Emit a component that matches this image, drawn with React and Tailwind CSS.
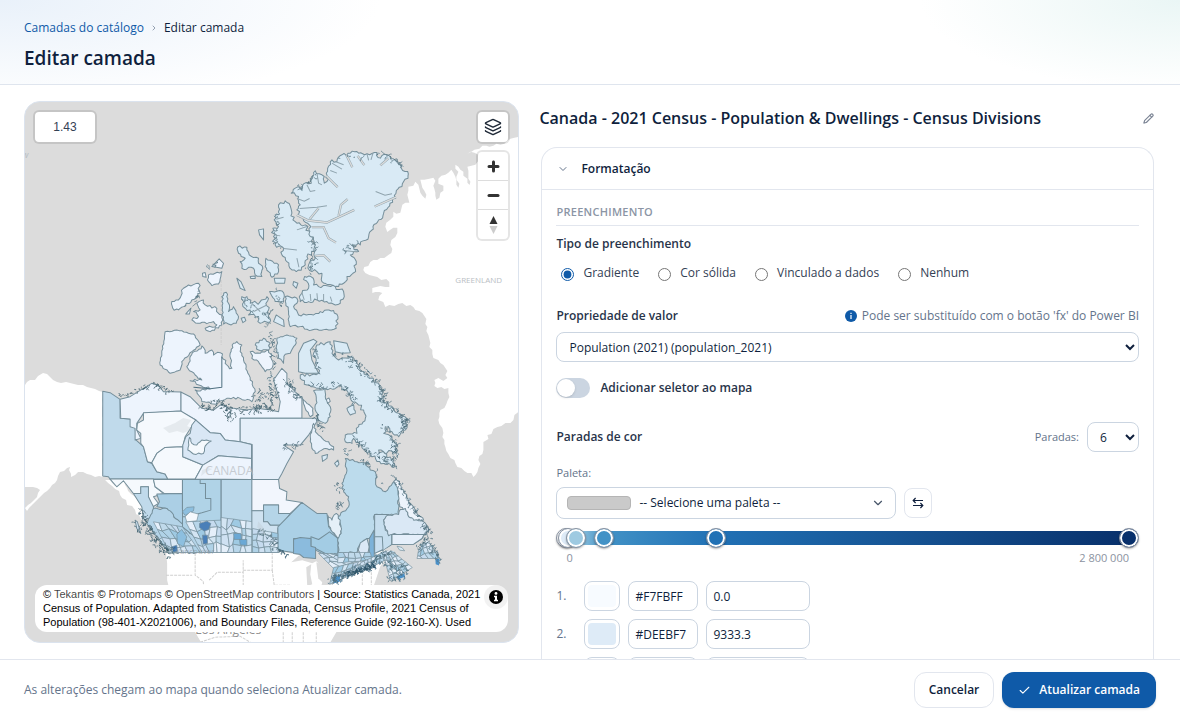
import React, { useState } from 'react';
import { ChevronDown, ChevronRight, Check, Layers, Pencil } from 'lucide-react';

const ICE = '#d9eaf5';
const PALE = '#edf4fd';
const SNOW = '#f5f9fd';
const BLUES = ['#c0daeb', '#d9e8f5', '#b0d2e7', '#e5effa', '#9fcae3', '#c6dbef', '#cfe1f2', '#b8d6ea', '#d3e5f3'];

// small seeded generator, so the map looks the same on every render
const rng = (seed) => {
  let s = seed * 7919 + 13;
  return () => {
    s = (s * 16807) % 2147483647;
    return s / 2147483647;
  };
};

const parse = (text) => text.trim().split(/\s+/).map((p) => p.split(',').map(Number));

// breaks the straight edges of an outline into a ragged coast
const coast = (text, amp = 0, step = 7) => {
  const pts = parse(text);
  if (!amp) return 'M' + pts.join('L') + 'Z';
  const rand = rng(pts[0][0] + pts.length);
  const out = [];
  pts.forEach(([x, y], i) => {
    const [nx, ny] = pts[(i + 1) % pts.length];
    const len = Math.hypot(nx - x, ny - y) || 1;
    const n = Math.max(1, Math.round(len / step));
    for (let k = 0; k < n; k++) {
      const t = k / n;
      const off = k === 0 ? 0 : (rand() - 0.5) * 2 * amp;
      out.push([
        Math.round(x + (nx - x) * t - ((ny - y) / len) * off),
        Math.round(y + (ny - y) * t + ((nx - x) / len) * off),
      ]);
    }
  });
  return 'M' + out.join('L') + 'Z';
};

// small census divisions inside a four cornered area
const divisions = (corners, cols, rows, seed) => {
  const [a, b, c, d] = parse(corners);
  const rand = rng(seed);
  const grid = [];
  for (let r = 0; r <= rows; r++) {
    for (let q = 0; q <= cols; q++) {
      const edge = r === 0 || q === 0 || r === rows || q === cols;
      const u = (q + (edge ? 0 : (rand() - 0.5) * 0.9)) / cols;
      const v = (r + (edge ? 0 : (rand() - 0.5) * 0.9)) / rows;
      grid.push([0, 1].map((i) => Math.round((1 - v) * ((1 - u) * a[i] + u * b[i]) + v * ((1 - u) * d[i] + u * c[i]))));
    }
  }
  const cells = [];
  for (let r = 0; r < rows; r++) {
    for (let q = 0; q < cols; q++) {
      const i = r * (cols + 1) + q;
      cells.push({
        d: 'M' + [grid[i], grid[i + 1], grid[i + cols + 2], grid[i + cols + 1]].join('L') + 'Z',
        fill: BLUES[Math.floor(rand() * BLUES.length)],
      });
    }
  }
  return cells;
};

// islets and inlets scattered along a shore
const islets = (text, count, spread, seed) => {
  const pts = parse(text);
  const rand = rng(seed);
  let d = '';
  for (let i = 0; i < count; i++) {
    const k = Math.floor(rand() * (pts.length - 1));
    const t = rand();
    const x = pts[k][0] + (pts[k + 1][0] - pts[k][0]) * t + (rand() - 0.5) * spread;
    const y = pts[k][1] + (pts[k + 1][1] - pts[k][1]) * t + (rand() - 0.5) * spread;
    d += `M${Math.round(x)},${Math.round(y)}l${Math.round((rand() - 0.5) * 16)},${Math.round((rand() - 0.5) * 16)}l${Math.round((rand() - 0.5) * 10)},${Math.round((rand() - 0.5) * 10)}`;
  }
  return d;
};

const arctic = [
  [ICE, '423,190 435,175 455,178 468,158 483,160 495,123 515,135 522,160 530,155 528,130 545,90 560,95 575,75 600,70 625,70 650,72 672,68 690,85 712,75 735,92 755,105 757,122 772,125 773,145 755,170 737,190 735,205 700,250 685,270 668,290 655,320 630,345 605,345 625,365 600,375 618,395 608,430 590,440 580,460 565,470 545,465 515,455 515,430 500,425 478,422 475,405 495,385 495,360 490,330 470,310 482,290 450,262 440,240 450,225 445,200', 6],
  [ICE, '405,213 420,228 425,250 435,275 465,285 480,320 495,345 492,365 470,380 465,405 445,420 425,420 410,395 395,375 400,355 375,345 370,320 368,295 385,290 372,270 385,245 385,225', 6],
  [ICE, '262,352 290,352 297,375 325,385 325,400 338,415 335,440 315,435 310,415 275,415 270,395 285,385 265,370', 4],
  [ICE, '347,385 385,405 385,425 365,442 355,425 345,410', 3],
  [ICE, '372,445 405,445 403,460 375,460', 0],
  [ICE, '430,455 443,460 438,475 428,465', 0],
  [ICE, '463,440 482,440 490,465 505,470 555,470 580,485 582,500 570,520 555,525 530,515 500,510 475,515 450,515 455,490 475,475', 6],
  [ICE, '405,500 440,505 440,520 430,530 445,555 490,555 510,545 550,542 563,560 558,595 535,600 500,598 470,598 450,590 420,590 415,545', 4],
  [ICE, '358,485 395,483 402,495 400,515 375,515', 2],
  [ICE, '378,555 400,570 402,590 370,575', 0],
  [ICE, '325,300 340,297 340,330 328,315', 0],
  [ICE, '300,440 315,438 315,446 302,446', 0],
  [ICE, '260,445 272,455 285,482 270,475', 0],
  [ICE, '275,500 290,500 300,520 330,515 350,500 355,540 355,580 330,580 325,560 295,555 300,540 285,535', 7],
  [ICE, '215,555 218,520 215,500 228,487 235,520 235,545 250,530 265,560 258,580 220,582', 4],
  [PALE, '160,510 165,525 200,535 205,550 215,555 215,585 180,605 165,595 200,585 190,575 150,580 125,570 145,560 130,545 150,540 140,520', 4],
  [PALE, '65,515 85,510 100,475 115,465 145,460 150,490 125,510 100,530 85,540 68,535', 5],
  [PALE, '175,435 215,425 212,440 205,462 185,467 172,450', 2],
  [PALE, '185,410 207,387 220,400 215,415', 0],
  [PALE, '107,552 122,535 118,552', 0],
  [PALE, '157,430 165,428 168,442 158,440', 0],
  [ICE, '273,565 283,562 287,572 278,578', 0],
];

const fjords = [
  '440,255 475,272 530,278 580,255 612,240',
  '565,258 572,225 592,208',
  '485,292 520,292 535,325 557,338',
  '673,230 737,202',
  '528,138 562,172',
  '588,75 606,112',
  '622,78 642,106',
  '690,107 715,85',
  '478,268 505,235',
  '495,378 520,376 540,395',
];

// inlets too narrow to show water
const inlets = [
  '448,236 500,232 530,228',
  '440,206 462,214 478,206',
  '676,185 704,196 725,192',
  '580,362 622,366',
  '400,356 440,360',
  '440,385 446,412',
  '455,488 462,510',
  '480,492 482,514',
  '500,490 502,512',
  '520,492 520,515',
  '540,500 545,515',
  '305,520 330,545',
  '310,545 350,525',
  '470,165 480,185 495,182',
  '500,130 505,160 515,165',
  '545,100 575,118',
  '555,95 580,105',
  '560,130 540,122',
  '650,72 655,92',
  '668,70 662,90',
  '440,300 470,290',
  '378,268 400,262',
  '372,315 390,318',
];

const west = [
  [PALE, '435,5 470,0 520,12 540,45 515,65 485,95 480,120 450,130 420,105 425,70', 2],
  [PALE, '500,110 510,80 545,48 555,70 575,60 580,75 600,68 625,110 635,115 630,70 640,40 650,35 665,45 660,65 670,90 690,150 705,185 695,215 660,205 620,205 580,222 545,215 535,195 525,180 570,177 510,152 545,150 525,135', 4],
  [PALE, '690,65 720,70 745,60 755,75 755,115 735,125 715,95 695,85', 4],
  [ICE, '705,45 730,25 750,40 745,60 715,60', 4],
  [PALE, '482,186 510,200 525,215 545,235 580,240 600,225 640,235 680,240 710,235 750,240 775,245 780,215 760,150 785,115 800,130 800,160 820,180 845,205 845,265 660,265 660,335 615,330 600,310 570,308 527,270 482,245', 0],
  ['#e5eff9', '660,265 895,265 875,300 865,315 840,345 790,345 820,365 800,400 785,430 775,448 696,448 696,343 660,335', 0],
  ['#c0daeb', '248,184 270,188 300,208 300,265 330,267 345,290 348,330 370,350 382,395 395,400 410,425 435,432 443,447 270,447 265,440 248,438', 0],
  [PALE, '300,208 330,200 370,175 395,160 415,165 430,185 455,185 482,186 482,243 370,250 350,280 350,300 362,325 345,330 345,295 330,290 330,267 302,265', 0],
  [SNOW, '370,248 482,243 527,270 495,320 488,350 435,352 410,370 395,398 382,395 370,350 362,340 362,310 350,300 352,280 370,270', 0],
  [SNOW, '395,398 410,370 435,352 488,350 488,380 548,405 525,447 443,447 435,432 410,425', 0],
  ['#d9e7f5', '527,270 570,308 600,310 615,330 660,335 694,343 694,385 595,377 548,405 488,380 488,345 497,320 510,310 515,285', 0],
  [SNOW, '508,322 515,340 530,345 545,330 573,333 555,348 550,370 520,372 503,360', 2],
  [PALE, '548,405 595,377 694,385 694,448 525,447', 0],
  [SNOW, '270,447 400,447 405,470 430,490 400,500 415,520 395,532 385,500 385,470 362,470 362,490 340,490 310,452 290,470', 0],
  [SNOW, '400,448 487,448 487,490 432,490 405,470', 0],
  ['#c0daeb', '340,490 362,490 362,470 385,470 385,500 400,530 400,560 372,570 365,530', 0],
  ['#abcfe5', '410,492 487,490 487,590 440,535 410,530 418,515', 0],
  ['#b5d4e8', '400,535 440,535 500,600 530,625 548,667 452,668 425,640 400,610 380,580', 3],
  ['#b0d3e7', '487,448 603,448 603,667 548,667 530,625 487,590', 0],
  ['#b0d3e7', '487,448 540,448 540,460 556,460 556,505 572,505 572,540 545,548 500,560 487,560', 0],
  ['#bbd8ea', '603,448 696,448 696,667 603,667', 0],
];

const westLines = '605,80 605,172 570,176 520,172';

const east = [
  [ICE, '80,55 110,45 140,55 135,75 120,100 105,103 100,130 85,115 80,90', 3],
  [ICE, '145,155 145,100 160,70 190,58 200,65 180,90 185,120 205,160 165,160', 0],
  [ICE, '250,62 290,70 300,98 275,100 255,95', 0],
  [ICE, '150,165 205,160 195,130 190,100 200,75 240,65 245,100 265,120 300,110 320,130 340,155 360,175 385,190 395,225 400,245 430,270 450,285 468,295 465,330 445,350 425,335 405,320 400,340 425,350 438,375 438,400 400,395 385,390 430,420 432,440 400,430 365,410 335,375 310,355 305,370 285,365 285,345 320,340 325,320 345,295 340,270 320,250 300,235 275,200 240,205 200,205 170,195 150,175', 6],
  [ICE, '190,212 225,205 225,230 240,260 240,290 225,310 205,300 195,270 198,240', 3],
  [PALE, '155,230 170,250 188,265 188,285 180,290 165,265', 2],
  ['#e5eff9', '190,310 200,340 250,380 250,390 225,385 195,400 185,385 180,350', 3],
  [ICE, '290,265 310,255 315,280 300,285', 2],
  [ICE, '215,408 232,403 230,415 217,424', 0],
  [ICE, '253,430 263,420 266,432 260,440', 0],
  [PALE, '228,238 236,234 240,244 232,250', 0],
  ['#f2f6fd', '5,478 85,478 88,505 110,515 108,540 155,547 120,580 85,580 85,555 40,555 40,572 5,572', 0],
  ['#b5d5e8', '40,555 85,555 85,580 120,580 95,615 60,615 52,605 40,605', 0],
  ['#cfe2f0', '5,572 40,572 40,605 52,605 60,615 95,615 83,625 83,697 5,697', 0],
  ['#abd0e6', '155,547 200,580 230,580 235,620 263,655 263,710 225,705 196,690 182,655 130,655 130,697 83,690 83,620', 0],
  ['#a3cce4', '182,650 205,658 238,635 263,655 263,710 225,700 196,685 182,680', 0],
  ['#8bbbdd', '130,657 150,652 182,655 182,678 196,682 196,715 160,712 148,702 130,700', 0],
  ['#edf4fc', '430,490 437,472 460,510 475,545 500,580 520,600 485,600 465,575 448,560 445,520', 4],
  ['#bcdbec', '285,415 320,425 345,430 360,450 375,455 380,500 405,515 430,485 440,500 445,530 445,583 373,583 373,635 357,655 340,660 325,680 320,697 263,697 263,655 272,640 270,610 262,590 295,560 295,530 280,515 275,490 288,460', 3],
  ['#e5f0f8', '232,585 245,600 258,580 270,600 272,640 262,655 242,630 236,618', 3],
  ['#c6deee', '373,583 415,583 400,600 405,630 425,643 425,673 400,690 373,695', 0],
  ['#dae8f5', '400,600 412,585 445,583 450,568 465,565 475,590 490,600 520,605 535,625 530,643 425,643 415,647 405,620', 3],
  ['#e5effa', '425,643 521,643 515,655 490,672 425,673', 0],
  ['#dbe8f5', '324,690 330,668 350,655 357,680 352,702 335,710', 0],
  ['#7db2d9', '357,655 371,630 372,710 357,715', 0],
  ['#c9dff0', '373,650 396,650 398,688 373,700', 0],
];

const westDivisions = [
  ...divisions('400,575 487,590 540,667 448,667', 5, 4, 3),
  ...divisions('497,575 603,570 603,667 545,667', 5, 4, 8),
  ...divisions('603,562 697,575 697,667 603,667', 5, 4, 5),
];

const eastDivisions = [
  ...divisions('7,625 83,640 83,697 7,697', 4, 4, 21),
  ...divisions('205,700 263,700 345,715 250,745', 5, 3, 12),
  ...divisions('263,697 360,697 365,720 262,728', 6, 2, 15),
  ...divisions('250,742 370,715 330,752 238,792', 8, 3, 17),
  ...divisions('330,728 430,682 436,704 330,758', 9, 3, 31),
  ...divisions('400,705 434,700 486,742 420,782', 5, 5, 37),
  ...divisions('505,690 530,658 568,715 500,715', 4, 3, 41),
];

const stateLines = [
  '195,553 195,575 203,581 205,598',
  '166,575 192,575',
  '209,580 217,572 243,572 243,560 243,586',
  '243,570 272,570 272,553',
  '272,570 274,585 290,585',
  '283,632 283,642',
  '292,632 292,642',
  '303,632 303,642',
  '316,632 316,642',
  '200,642 215,637 240,636 250,642',
  '243,586 243,604',
  '362,574 362,590',
  '371,572 371,590',
];

function Areas({ items }) {
  return items.map(([fill, points, amp], i) => <path key={i} d={coast(points, amp)} fill={fill} />);
}

function CensusMap() {
  return (
    <svg viewBox="25 102 493 540" preserveAspectRatio="xMidYMid slice" className="absolute inset-0 h-full w-full" aria-hidden="true">
      {/* neighbouring land */}
      <g fill="#fff">
        <path d={coast('518,137 510,139 500,145 482,146 467,154 481,153 478,161 467,167 470,190 463,172 455,165 458,188 451,170 438,179 443,191 436,200 433,178 420,180 425,199 415,182 408,187 409,203 402,205 400,213 393,212 385,227 387,232 397,228 395,237 390,245 391,253 380,258 370,262 364,267 365,273 377,277 389,282 389,287 372,288 372,293 382,293 378,300 385,307 398,304 410,305 422,313 427,327 430,343 433,358 438,360 445,368 447,378 434,380 434,386 448,388 449,397 440,410 438,420 443,433 445,447 450,458 457,467 467,473 473,477 477,472 478,460 483,450 487,435 497,427 510,423 518,412 530,400 530,137', 2, 4)} />
        <path d={coast('25,385 30,380 35,380 38,376 43,373 50,377 57,382 70,383 87,387 103,392 103,477 95,477 87,474 78,472 71,477 70,467 60,472 57,480 52,485 44,493 35,502 27,511 25,508 37,497 40,490 33,487 20,488 20,385', 1, 4)} />
        <path d={coast('103,476 115,486 124,481 134,496 142,506 144,520 136,514 126,500 112,486', 2, 4)} />
        <path d="M166,553 L167,563 L167,580 L172,600 L185,620 L195,632 L202,644 L329,644 L336,632 L350,615 L372,590 L380,566 L388,556 L386,545 L370,552 L350,575 L320,590 L325,570 L315,560 L300,555 L285,552 Z" />
      </g>
      <g fill="#dcdcdc">
        <path d="M291,562 L300,554 L312,553 L318,560 L312,563 L302,560 Z" />
        <path d="M306,567 L311,564 L310,574 L312,584 L307,586 Z" />
        <path d="M316,562 L325,566 L331,576 L324,584 L318,578 Z" />
      </g>
      <g fill="none" stroke="#cfcfcf" strokeDasharray="3 1">
        {stateLines.map((points) => (
          <polyline key={points} points={points} />
        ))}
        <polyline points="221,280 221,345" />
      </g>

      {/* the three groups share one coordinate scale, a third of the canvas unit */}
      <g stroke="#748e9a" strokeWidth="3" strokeLinejoin="round">
        <g transform="translate(150 130) scale(0.33333)">
          <Areas items={arctic} />
          <g fill="none" strokeLinejoin="miter">
            {fjords.map((points) => (
              <polyline key={points} points={points} strokeWidth="7" stroke="#8fa3ad" />
            ))}
            {fjords.map((points) => (
              <polyline key={points} points={points} stroke="#dcdcdc" strokeWidth="4" />
            ))}
            {inlets.map((points) => (
              <polyline key={points} points={points} stroke="#8fa3ad" />
            ))}
          </g>
          <g strokeWidth="2" stroke="#4f6c79" fill={ICE}>
            <path d={islets('350,600 345,560 365,545 390,520 375,490', 22, 20, 4)} />
            <path d={islets('165,420 200,395', 8, 10, 6)} />
            <path d={islets('105,545 160,470', 10, 24, 9)} />
            <path d={islets('380,250 375,330 410,385', 18, 10, 10)} />
            <path d={islets('445,180 500,140', 14, 12, 12)} />
            <path d={islets('560,85 700,72 760,110', 24, 8, 14)} />
            <path d={islets('575,370 600,350 640,335', 14, 12, 24)} />
            <path d={islets('480,310 495,400 470,420', 24, 18, 22)} />
            <path d={islets('285,505 330,560', 12, 24, 23)} />
          </g>
        </g>
        <g transform="translate(20 330) scale(0.33333)">
          <Areas items={west} />
          <g strokeWidth="2">
            {westDivisions.map((cell, i) => (
              <path key={i} d={cell.d} fill={cell.fill} />
            ))}
            <path d="M487,545 L500,532 L522,530 L520,542 L495,556 Z" fill="#8dbfdf" />
            <path d="M495,560 L510,545 L535,552 L530,572 L500,575 Z" fill={SNOW} />
            <path d="M538,580 L560,573 L572,580 L566,598 L552,603 L538,592 Z" fill="#4a7fb8" />
            <path d="M547,615 L562,615 L562,640 L549,642 Z" fill="#4a7fb8" />
            <path d="M470,612 L485,598 L500,620 L490,650 L472,640 Z" fill="#8dbfdf" />
            <path d="M640,610 L662,610 L664,628 L642,628 Z M658,628 L680,628 L680,646 L660,644 Z" fill="#6aa8d5" />
            <path d="M455,650 L470,645 L472,664 L458,666 Z" fill="#3f78b5" />
          </g>
          <path d="M345,570 L352,575 L362,610 L350,595 Z" fill="#cfe1f2" />
          <polyline points={westLines} fill="none" stroke="#4f7080" />
          <g stroke="#3a5a68" strokeWidth="2">
            <path d={islets('365,545 375,585 400,620 430,660 450,670', 120, 24, 2)} fill={PALE} />
            <path d={islets('300,200 350,180 400,160 450,185', 36, 12, 5)} fill="#dcdcdc" />
            <path d={islets('540,235 600,220 640,245 700,235 760,235', 90, 22, 7)} fill="#dcdcdc" />
            <path d={islets('620,235 632,280', 16, 14, 11)} fill="#dcdcdc" />
            <path d={islets('705,180 725,220 760,200 775,160', 50, 34, 13)} fill={PALE} />
            <path d={islets('340,575 355,605', 6, 8, 31)} fill={PALE} />
          </g>
        </g>
        <g transform="translate(250 320) scale(0.33333)">
          <Areas items={east} />
          <g strokeWidth="2">
            {eastDivisions.map((cell, i) => (
              <path key={i} d={cell.d} fill={cell.fill} />
            ))}
          </g>
          <path d="M400,690 L425,675 L490,674 L500,680 L480,712 L455,712 L440,698 L425,692 Z" fill="#dcdcdc" stroke="none" />
          <path d="M425,643 L521,643 L515,655 L490,672 L425,673 Z" fill="#e5effa" />
          <path d="M440,678 L455,682 L463,692 L448,690 Z" fill={ICE} strokeWidth="2" />
          <path d="M555,718 L568,715 L566,736 L556,732 Z M440,768 L462,760 L464,770 L442,778 Z M255,770 L270,765 L268,785 L250,790 Z" fill="#4a90c8" stroke="none" />
          <g stroke="#4a6977" strokeWidth="2">
            <path d={islets('300,115 340,155 390,200 400,240', 60, 24, 3)} fill={ICE} />
            <path d={islets('385,235 430,270 468,300 450,340', 80, 16, 6)} fill={ICE} />
            <path d={islets('400,315 435,370 435,410', 36, 14, 14)} fill={ICE} />
            <path d={islets('310,355 350,390 430,435', 46, 12, 16)} fill={ICE} />
            <path d={islets('195,85 205,160', 14, 12, 36)} fill={ICE} />
            <path d={islets('250,110 310,120', 16, 24, 37)} fill={ICE} />
            <path d={islets('170,200 280,195 320,250', 40, 18, 18)} fill={ICE} />
            <path d={islets('110,180 145,240', 40, 18, 19)} fill={PALE} />
            <path d={islets('60,40 75,100 70,170 30,240 5,270', 46, 20, 20)} fill={ICE} />
            <path d={islets('195,285 215,325', 24, 16, 26)} fill={PALE} />
            <path d={islets('100,380 150,375', 16, 12, 27)} fill={PALE} />
            <path d={islets('435,470 470,545 515,600 535,640', 60, 14, 28)} fill="#cfe1f2" />
            <path d={islets('430,400 435,440', 10, 10, 29)} fill={ICE} />
            <path d={islets('265,545 268,565', 14, 14, 30)} fill={ICE} />
            <path d={islets('255,480 275,520', 8, 14, 38)} fill={ICE} />
            <path d={islets('285,385 290,400', 5, 18, 39)} fill={ICE} />
            <path d={islets('320,415 370,440 400,500', 14, 8, 40)} fill={ICE} />
            <path d={islets('240,782 280,768 330,748 380,720', 110, 16, 33)} fill="#6aa5d0" />
            <path d={islets('290,762 345,745 370,735', 70, 12, 43)} fill="#2f5f80" stroke="#2f5468" />
            <path d={islets('375,712 430,690', 24, 16, 34)} fill="#b0d2e7" />
            <path d={islets('405,715 430,748 480,745', 40, 26, 35)} fill="#9fcae3" />
            <path d={islets('500,690 535,655 555,700 565,720', 50, 16, 44)} fill="#b0d2e7" />
            <path d={islets('415,780 470,762', 20, 10, 45)} fill="#6aa5d0" />
            <path d={islets('15,635 65,650 75,690', 26, 22, 46)} fill="#d9e8f5" />
            <path d={islets('85,688 110,702', 14, 8, 47)} fill="#2f5f80" />
          </g>
        </g>
      </g>

      <g fill="#b9bec4" fontFamily="'Open Sans', sans-serif">
        <path d="M163,428 l12,-5 8,-5 8,2 -4,6 6,3 -10,4 -6,-2 -8,2 z M202,470 l6,-2 4,1 -6,3 -5,4 z M258,521 l5,6 3,9 -5,-4 -4,-5 z" opacity="0.25" />
        <text x="205" y="475" fontSize="12" opacity="0.75">CANADA</text>
        <text x="455" y="283" fontSize="8">GREENLAND</text>
        <text x="175" y="554" fontSize="8" fill="#8c959c" opacity="0.6">Vancouver</text>
        <text x="195" y="634" fontSize="12" fill="#8f8f8f">Los Angeles</text>
        <text x="22" y="158" fontSize="9" fontStyle="italic">w</text>
      </g>
    </svg>
  );
}

function MapPanel() {
  const group = 'border-2 border-black/10 bg-white bg-clip-padding';

  return (
    <section aria-label="Mapa" className="relative mb-4 overflow-hidden rounded-2xl border border-[#dbe3ee] bg-[#dcdcdc]">
      <CensusMap />

      <div className={`absolute left-2 top-2 flex h-[34px] w-16 items-center justify-center rounded-md font-['Liberation_Sans',sans-serif] text-xs text-[#334155] ${group}`}>
        1.43
      </div>

      <div className="absolute right-2 top-2 flex flex-col gap-[6px]">
        <button type="button" aria-label="Camadas" className={`flex h-[34px] w-[34px] items-center justify-center rounded-md text-[#1f2937] ${group}`}>
          <Layers size={18} strokeWidth={2} />
        </button>
        <div className={`flex w-[34px] flex-col divide-y divide-[#dddddd] rounded-md ${group}`}>
          <button type="button" aria-label="Aproximar" className="flex h-[29px] items-center justify-center">
            <svg width="29" height="29" viewBox="0 0 29 29" fill="#333">
              <path d="M14.5 8.5c-.8 0-1.5.7-1.5 1.5v3h-3a1.5 1.5 0 0 0 0 3h3v3a1.5 1.5 0 0 0 3 0v-3h3a1.5 1.5 0 0 0 0-3h-3v-3c0-.8-.7-1.5-1.5-1.5z" />
            </svg>
          </button>
          <button type="button" aria-label="Afastar" className="flex h-[29px] items-center justify-center">
            <svg width="29" height="29" viewBox="0 0 29 29" fill="#333">
              <path d="M10 13a1.5 1.5 0 0 0 0 3h9a1.5 1.5 0 0 0 0-3z" />
            </svg>
          </button>
          <button type="button" aria-label="Repor o norte" className="flex h-[29px] items-center justify-center">
            <svg width="29" height="29" viewBox="0 0 29 29">
              <path d="m10.5 14 4-8 4 8z" fill="#333" />
              <path d="m10.5 16 4 8 4-8z" fill="#ccc" />
            </svg>
          </button>
        </div>
      </div>

      <div className="absolute inset-x-[10px] bottom-[10px] flex h-[47px] overflow-hidden rounded-xl bg-white font-['Liberation_Sans',sans-serif] text-[11px] leading-[14px] text-black">
        <p className="flex-1 py-[2px] pl-2">
          © <a href="#tekantis" className="text-black/75">Tekantis</a> © <a href="#protomaps" className="text-black/75">Protomaps</a> ©{' '}
          <a href="#osm" className="text-black/75">OpenStreetMap contributors</a> | Source: Statistics Canada, 2021 Census of Population. Adapted from
          Statistics Canada, Census Profile, 2021 Census of Population (98-401-X2021006), and Boundary Files, Reference Guide (92-160-X). Used
        </p>
        <button type="button" aria-label="Atribuição" className="h-6 w-6 shrink-0 rounded-full bg-black/5">
          <svg width="24" height="24" viewBox="0 0 24 24">
            <circle cx="12" cy="12" r="7" />
            <circle cx="12" cy="8.4" r="1.4" fill="#fff" />
            <path d="M10 10.8h3v4h1v1.4h-4v-1.4h1v-2.6h-1z" fill="#fff" />
          </svg>
        </button>
      </div>
    </section>
  );
}

const FILL_TYPES = ['Gradiente', 'Cor sólida', 'Vinculado a dados', 'Nenhum'];

const STOPS = [
  { color: '#F7FBFF', value: '0.0', position: 0 },
  { color: '#DEEBF7', value: '9333.3', position: 3 },
  { color: '#9ECAE1', value: '46666.7', position: 17 },
  { color: '#4292C6', value: '186666.7', position: 67 },
  { color: '#2171B5', value: '746666.7', position: 266 },
  { color: '#08306B', value: '2800000.0', position: 1000 },
];

const GRADIENT = STOPS.map((stop) => `${stop.color} ${stop.position / 10}%`).join(', ');

function GradientSlider() {
  return (
    <div>
      <div className="relative flex h-5 items-center px-[10px]">
        <div className="h-[14px] w-full" style={{ background: `linear-gradient(to right, ${GRADIENT})` }} />
        {STOPS.map((stop, i) => (
          <input
            key={stop.color}
            type="range"
            min="0"
            max="1000"
            defaultValue={stop.position}
            aria-label={`Parada ${i + 1}`}
            style={{ '--stop': stop.color }}
            className="pointer-events-none absolute inset-0 m-0 h-5 w-full appearance-none bg-transparent [&::-webkit-slider-thumb]:pointer-events-auto [&::-webkit-slider-thumb]:h-5 [&::-webkit-slider-thumb]:w-5 [&::-webkit-slider-thumb]:appearance-none [&::-webkit-slider-thumb]:rounded-full [&::-webkit-slider-thumb]:border [&::-webkit-slider-thumb]:border-[#8a94a3] [&::-webkit-slider-thumb]:bg-(--stop) [&::-webkit-slider-thumb]:shadow-[inset_0_0_0_2px_#fff,0_1px_2px_rgba(0,0,0,0.3)]"
          />
        ))}
      </div>
      <div className="mt-[2px] flex justify-between px-[10px] text-[11px] leading-4 text-[#8b93a1]">
        <span>0</span>
        <span>2 800 000</span>
      </div>
    </div>
  );
}

function StopRow({ index, stop }) {
  return (
    <div className="flex items-center gap-2">
      <span className="w-5 text-xs text-[#64748b]">{index + 1}.</span>
      <button type="button" aria-label={`Cor ${index + 1}`} className="h-[30px] w-9 rounded-lg border border-[#cbd5e1] bg-white p-[3px]">
        <span className="block h-full rounded" style={{ background: stop.color }} />
      </button>
      <input
        aria-label={`Código da cor ${index + 1}`}
        defaultValue={stop.color}
        className="h-[30px] w-[70px] rounded-lg border border-[#cbd5e1] bg-white px-[6px] text-xs text-[#0f1f3d]"
      />
      <input
        aria-label={`Valor ${index + 1}`}
        defaultValue={stop.value}
        className="h-[30px] w-[104px] rounded-lg border border-[#cbd5e1] bg-white px-[6px] text-xs text-[#0f1f3d]"
      />
    </div>
  );
}

function FormattingCard() {
  const [fillType, setFillType] = useState('Gradiente');

  return (
    <section className="mx-[2px] rounded-t-2xl border border-b-0 border-[#e2e6ee] bg-white">
      <button type="button" className="flex h-[41px] w-full items-center gap-3 px-[15px] text-left text-xs font-semibold text-[#0f1f3d]">
        <ChevronDown size={12} className="text-[#64748b]" />
        Formatação
      </button>

      <div className="border-t border-[#e2e6ee] px-[14px] pt-3">
        <h3 className="border-b border-[#e2e6ee] pb-[3px] text-[11px] leading-5 font-semibold tracking-wide text-[#8b95a5]">PREENCHIMENTO</h3>

        <fieldset>
          <legend className="pt-2 text-xs leading-5 font-semibold text-[#28344a]">Tipo de preenchimento</legend>
          <div className="mt-[9px] flex gap-[19px] px-[5px] text-xs leading-5 text-[#334155]">
            {FILL_TYPES.map((type) => (
              <label key={type} className="flex items-center gap-[9px]">
                <input
                  type="radio"
                  name="fillType"
                  checked={fillType === type}
                  onChange={() => setFillType(type)}
                  className="mt-[3px] h-[13px] w-[13px] accent-[#0f5aa8]"
                />
                {type}
              </label>
            ))}
          </div>
        </fieldset>

        <div className="mt-[23px] flex items-center justify-between text-xs leading-5">
          <label htmlFor="property" className="font-semibold text-[#28344a]">Propriedade de valor</label>
          <span className="flex items-center gap-[5px] text-[#64748b]">
            <svg width="12" height="12" viewBox="0 0 12 12">
              <circle cx="6" cy="6" r="6" fill="#0f5aa8" />
              <path d="M5.4 5h1.2v4H5.4zM5.4 2.8h1.2v1.3H5.4z" fill="#fff" />
            </svg>
            Pode ser substituído com o botão 'fx' do Power BI
          </span>
        </div>
        <select id="property" className="mt-[6px] block h-[30px] w-full rounded-lg border border-[#cbd5e1] bg-white pl-2 text-xs text-[#0f1f3d]">
          <option>Population (2021) (population_2021)</option>
        </select>

        <label className="mt-4 flex items-center gap-[10px] text-xs leading-5 font-semibold text-[#28344a]">
          <input
            type="checkbox"
            className="h-5 w-[34px] appearance-none rounded-full bg-[#cbd5e1] before:m-[1px] before:block before:h-[18px] before:w-[18px] before:rounded-full before:bg-white before:shadow-sm checked:bg-[#0f5aa8] checked:before:ml-[15px]"
          />
          Adicionar seletor ao mapa
        </label>

        <div className="mt-6 flex items-center justify-between text-xs">
          <h4 className="font-semibold text-[#28344a]">Paradas de cor</h4>
          <div className="flex items-center gap-2 text-[#64748b]">
            <label htmlFor="stops" className="text-[11px]">Paradas:</label>
            <select id="stops" defaultValue="6" className="h-[30px] w-[52px] rounded-lg border border-[#cbd5e1] bg-white pl-2 text-[#0f1f3d]">
              {[2, 3, 4, 5, 6, 7].map((n) => (
                <option key={n}>{n}</option>
              ))}
            </select>
          </div>
        </div>

        <p className="mt-3 text-[11px] leading-[18px] text-[#64748b]">Paleta:</p>
        <div className="mt-[5px] flex items-center gap-2">
          <button type="button" className="flex h-8 w-[340px] items-center rounded-lg border border-[#cbd5e1] bg-white px-[10px] text-xs text-[#0f1f3d]">
            <span className="h-[14px] w-16 rounded border border-[#b5b5b5] bg-[#cacaca]" />
            <span className="ml-2 flex-1 text-left">-- Selecione uma paleta --</span>
            <ChevronDown size={14} className="text-[#475569]" />
          </button>
          <button type="button" aria-label="Inverter paleta" className="flex h-[30px] w-7 items-center justify-center rounded-lg border border-[#e2e6ee] bg-white">
            <svg width="12" height="12" viewBox="0 0 12 12" fill="none" stroke="#0f1f3d" strokeWidth="1.2">
              <path d="M11 3.5H1.2M3.6 1 1.2 3.5 3.6 6M1 8.5h9.8M8.4 6l2.4 2.5L8.4 11" />
            </svg>
          </button>
        </div>

        <div className="mt-[9px]">
          <GradientSlider />
        </div>

        <div className="mt-[15px] flex flex-col gap-2">
          {STOPS.map((stop, i) => (
            <StopRow key={stop.color} index={i} stop={stop} />
          ))}
        </div>
      </div>
    </section>
  );
}

export default function App() {
  return (
    <div className="flex h-screen flex-col overflow-hidden bg-white font-['Open_Sans',sans-serif] text-[#0f1f3d]">
      <header className="border-b border-[#dfe5ee] bg-[radial-gradient(ellipse_380px_110px_at_top_left,#e9f1fa,transparent),radial-gradient(ellipse_260px_90px_at_top_right,#eaf6f5,transparent)] px-6 pt-[18px] pb-3">
        <nav aria-label="Navegação" className="flex items-center gap-[6px] text-xs leading-5 font-medium">
          <a href="#catalogo" className="text-[#0f5aa8]">Camadas do catálogo</a>
          <ChevronRight size={8} className="text-[#64748b]" />
          <span>Editar camada</span>
        </nav>
        <h1 className="mt-[6px] text-[19px] leading-7 font-semibold">Editar camada</h1>
      </header>

      <main className="grid min-h-0 flex-1 grid-cols-[45fr_56fr] gap-5 px-6 pt-4">
        <MapPanel />
        <div className="min-h-0 overflow-y-auto [scrollbar-width:none]">
          <div className="flex h-[34px] items-center justify-between">
            <h2 className="text-base font-semibold">Canada - 2021 Census - Population &amp; Dwellings - Census Divisions</h2>
            <button type="button" aria-label="Editar nome" className="mr-[2px] text-[#7b8494]">
              <Pencil size={11} strokeWidth={2.5} />
            </button>
          </div>
          <div className="mt-3">
            <FormattingCard />
          </div>
        </div>
      </main>

      <footer className="flex items-center justify-between border-t border-[#e2e6ee] bg-white px-6 py-3 text-xs">
        <p className="text-[#64748b]">As alterações chegam ao mapa quando seleciona Atualizar camada.</p>
        <div className="flex gap-2">
          <button type="button" className="h-9 rounded-xl border border-[#e2e6ee] bg-white px-[14px] font-semibold">Cancelar</button>
          <button type="button" className="flex h-9 items-center gap-2 rounded-xl bg-[#0f5aa8] px-4 font-semibold text-white shadow-sm">
            <Check size={13} />
            Atualizar camada
          </button>
        </div>
      </footer>
    </div>
  );
}
